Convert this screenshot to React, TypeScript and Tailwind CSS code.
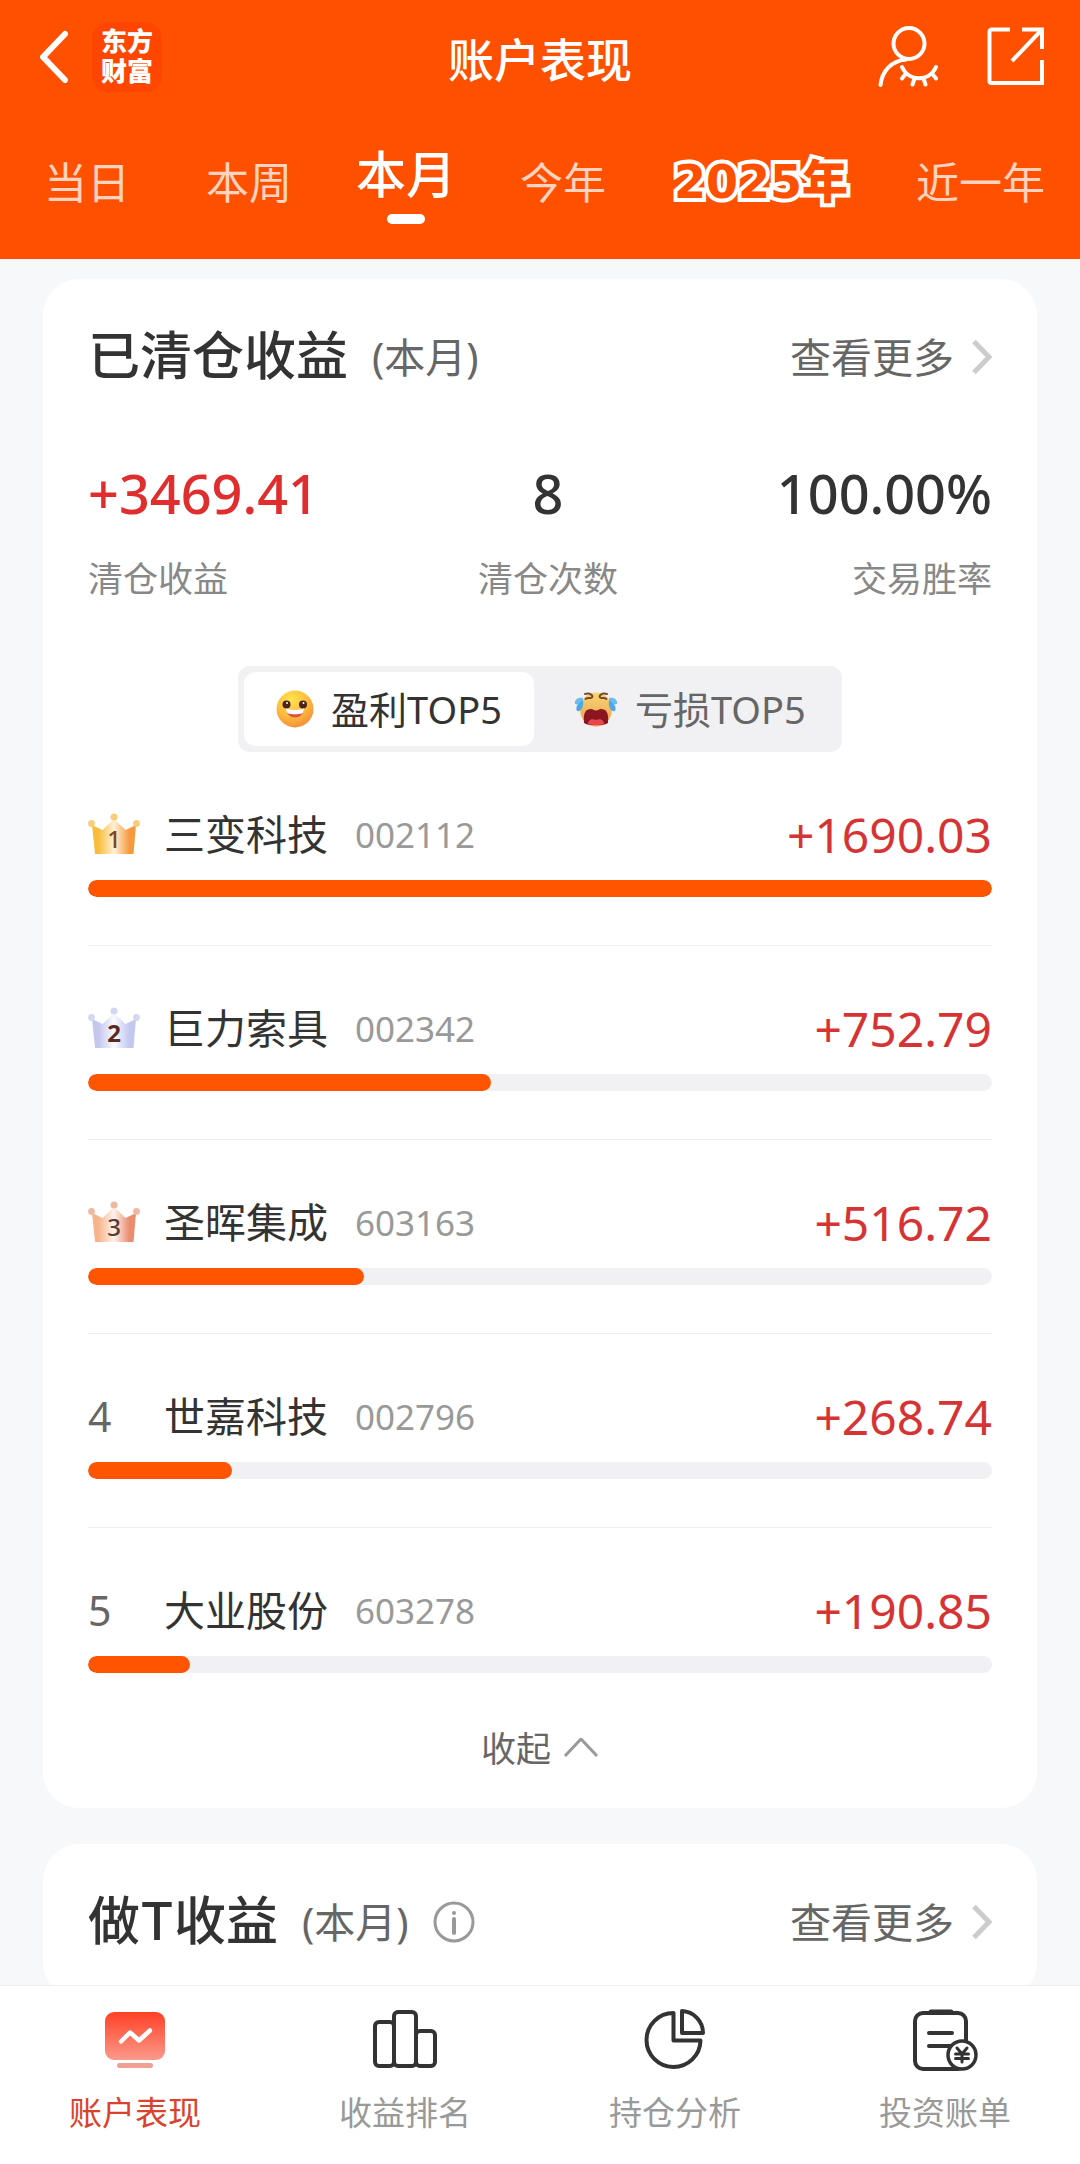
import { useState } from 'react'
import type { ReactNode } from 'react'

type Stock = {
  name: string
  code: string
  profit: number
}

const periods = ['当日', '本周', '本月', '今年', '2025年', '近一年']

const winners: Stock[] = [
  { name: '三变科技', code: '002112', profit: 1690.03 },
  { name: '巨力索具', code: '002342', profit: 752.79 },
  { name: '圣晖集成', code: '603163', profit: 516.72 },
  { name: '世嘉科技', code: '002796', profit: 268.74 },
  { name: '大业股份', code: '603278', profit: 190.85 },
]

const crowns = [
  { edge: '#f9bd3c', mid: '#fff1d6', end: '#f59a3e', ball: '#f8cd78', text: '#7d4526', weight: 500 },
  { edge: '#c3c8ec', mid: '#fafaff', end: '#c3c8ee', ball: '#d3d7f2', text: '#5a2a20', weight: 700 },
  { edge: '#f6b48c', mid: '#fff3ec', end: '#ea8c70', ball: '#f0b8a2', text: '#5c3a36', weight: 500 },
]

function BackIcon() {
  return (
    <svg width="33" height="54" viewBox="0 0 33 54" fill="none" stroke="#fff" strokeWidth="6" strokeLinecap="round" strokeLinejoin="round">
      <path d="M29 4 7 27 29 50" />
    </svg>
  )
}

function HiddenUserIcon() {
  return (
    <svg width="60" height="62" viewBox="0 0 60 62" fill="none" stroke="#fff" strokeWidth="4" strokeLinecap="round">
      <circle cx="31" cy="17.500" r="15.500" />
      <path d="M2.500 59C4 45 13 35 28 33.500" />
      <path d="M24 41c7 15 27 15 34 0" />
      <path d="m28 47.500-4 5M36.500 52.500l-2 6M45.500 52.500l2 6M54 47.500l4 5" />
    </svg>
  )
}

function ShareIcon() {
  return (
    <svg width="58" height="62" viewBox="0 0 58 62" fill="none" stroke="#fff" strokeWidth="4">
      <path d="M24 3.500H5.500a2 2 0 0 0-2 2V55a2 2 0 0 0 2 2H56V34" />
      <path d="M36 3.500h20V23M56 3.500 26 35" />
    </svg>
  )
}

function ChevronRight() {
  return (
    <svg width="20" height="36" viewBox="0 0 20 36" fill="none" stroke="#ccc" strokeWidth="5">
      <path d="m2 2.500 15 15.500L2 33.500" />
    </svg>
  )
}

function InfoIcon() {
  return (
    <svg width="42" height="42" viewBox="0 0 42 42" fill="none" stroke="#999" strokeWidth="3">
      <circle cx="21" cy="21" r="19" />
      <path d="M21 18v14" strokeWidth="4" strokeLinecap="round" />
      <circle cx="21" cy="12" r="2" fill="#999" stroke="none" />
    </svg>
  )
}

function SmileEmoji() {
  return (
    <svg width="38" height="38" viewBox="0 0 38 38">
      <defs>
        <radialGradient id="smile-face" cx="0.4" cy="0.25" r="0.8">
          <stop offset="0" stopColor="#ffe34d" />
          <stop offset="0.6" stopColor="#fdb83c" />
          <stop offset="1" stopColor="#f08a3c" />
        </radialGradient>
      </defs>
      <circle cx="19" cy="19" r="18.500" fill="url(#smile-face)" />
      <circle cx="10.500" cy="14.500" r="4" fill="#4a2418" />
      <circle cx="27" cy="14.500" r="4" fill="#4a2418" />
      <circle cx="11" cy="13" r="1" fill="#fff" />
      <circle cx="27.500" cy="13" r="1" fill="#fff" />
      <path d="M10 18.500c4 1.500 14 1.500 18 0 .5 4-3.500 9-9 9s-9.500-5-9-9Z" fill="#e0503f" />
      <path d="M10 18.500c4 1.500 14 1.500 18 0 .2 2.500-1 4.500-2 5-4 1-10 1-14 0-1-.5-2.200-2.500-2-5Z" fill="#fff" />
    </svg>
  )
}

function CryEmoji() {
  return (
    <svg width="44" height="38" viewBox="0 0 44 38">
      <defs>
        <linearGradient id="cry-face" x1="0" y1="0" x2="0" y2="1">
          <stop offset="0" stopColor="#f7d873" />
          <stop offset="1" stopColor="#ef9a50" />
        </linearGradient>
      </defs>
      <ellipse cx="22" cy="19.500" rx="16" ry="17" fill="url(#cry-face)" />
      <path d="M11 4c6-1.500 8 2 7 3.500S14 7 11.500 9M33 4c-6-1.500-8 2-7 3.500S30 7 32.500 9" fill="none" stroke="#7a4a2a" strokeWidth="2" strokeLinecap="round" />
      <path d="M10 33c-1-11 2-14 7-14 2 0 3 1.500 5 1.500s3-1.500 5-1.500c5 0 8 3 7 14-3 2-7 2-12 2s-9 0-12-2Z" fill="#8c1620" />
      <path d="M14 34c0-4 4-6 8-4 4-2 8 0 8 4-5 1.500-11 1.500-16 0Z" fill="#e6484e" />
      <path d="M9 8c-5-1-9 2-8 6 3 1.500 8-1 8-6ZM35 8c5-1 9 2 8 6-3 1.500-8-1-8-6Z" fill="#6bbdf0" />
      <path d="M9 10c-5 3-8 7-6 11 4 1 7-4 6-11ZM35 10c5 3 8 7 6 11-4 1-7-4-6-11Z" fill="#4ea8e8" />
    </svg>
  )
}

function Crown({ rank }: { rank: number }) {
  const c = crowns[rank - 1]
  const id = `crown-${rank}`

  return (
    <svg width="52" height="42" viewBox="0 0 52 42" role="img" aria-label={`第${rank}名`}>
      <defs>
        <linearGradient id={id}>
          <stop offset="0.150" stopColor={c.edge} />
          <stop offset="0.5" stopColor={c.mid} />
          <stop offset="0.850" stopColor={c.end} />
        </linearGradient>
      </defs>
      <path d="M4 12 14.500 17 26 6 37.500 17 48 12 45.500 41H7Z" fill={`url(#${id})`} />
      <circle cx="3.500" cy="10.500" r="3.400" fill={c.ball} />
      <circle cx="26" cy="4" r="3.500" fill={c.ball} />
      <circle cx="48.500" cy="10.500" r="3.400" fill={c.ball} />
      <text x="26" y="35" textAnchor="middle" fontSize="24" fontWeight={c.weight} fill={c.text}>
        {rank}
      </text>
    </svg>
  )
}

function PerformanceIcon() {
  return (
    <svg width="66" height="64" viewBox="0 0 66 64" fill="none">
      <defs>
        <linearGradient id="nav-screen" x1="0" y1="0" x2="0" y2="1">
          <stop offset="0" stopColor="#ff4026" />
          <stop offset="1" stopColor="#fb9a8b" />
        </linearGradient>
      </defs>
      <rect x="3" y="4" width="60" height="48" rx="9" fill="url(#nav-screen)" />
      <path d="m19 33.500 9-9 9 8 11-10" stroke="#fff" strokeWidth="4.500" strokeLinecap="round" strokeLinejoin="round" />
      <rect x="15" y="55" width="36" height="5" rx="2.500" fill="#f0a093" />
    </svg>
  )
}

function RankingIcon() {
  return (
    <svg width="66" height="64" viewBox="0 0 66 64" fill="none" stroke="#333" strokeWidth="4">
      <rect x="3" y="14" width="19" height="44" rx="4" />
      <rect x="22" y="4" width="22" height="54" rx="4" />
      <rect x="44" y="23" width="19" height="35" rx="4" />
    </svg>
  )
}

function AnalysisIcon() {
  return (
    <svg width="66" height="64" viewBox="0 0 66 64" fill="none" stroke="#333" strokeWidth="4" strokeLinejoin="round">
      <path d="M31.500 5v27.500h27A27 27 0 1 1 31.500 5Z" />
      <path d="M40 3v22h21A22 22 0 0 0 40 3Z" />
    </svg>
  )
}

function BillIcon() {
  return (
    <svg width="66" height="64" viewBox="0 0 66 64" fill="none" stroke="#333" strokeWidth="4" strokeLinecap="round">
      <rect x="3" y="5" width="51" height="56" rx="8" />
      <path d="M19 4h20" strokeWidth="5" />
      <path d="M17 25h23M17 38h23" />
      <circle cx="50" cy="47" r="14" fill="#fff" strokeWidth="3.500" />
      <path d="m45 40 5 6 5-6M50 46v8M43.500 46h13M43.500 50.500h13" strokeWidth="3" />
    </svg>
  )
}

const navItems = [
  { label: '账户表现', icon: <PerformanceIcon /> },
  { label: '收益排名', icon: <RankingIcon /> },
  { label: '持仓分析', icon: <AnalysisIcon /> },
  { label: '投资账单', icon: <BillIcon /> },
]

function CardHeader({ title, children }: { title: string; children?: ReactNode }) {
  return (
    <div className="flex h-14 items-center">
      <h2 className="font-['Inter','Noto_Sans_CJK_SC',sans-serif] text-[52px] font-medium leading-14 text-[#333]">{title}</h2>
      <span className="ml-6 text-[41px] leading-14 text-[#666]">(本月)</span>
      {children}
      <a href="#more" className="ml-auto flex items-center gap-[18px] text-[41px] leading-14 text-[#666]">
        查看更多
        <ChevronRight />
      </a>
    </div>
  )
}

function StockRow({ stock, rank, max }: { stock: Stock; rank: number; max: number }) {
  return (
    <li className="border-b border-[#eee] pt-14 pb-12 last:border-0 last:pb-0">
      <div className="flex h-[52px] items-center">
        <div className="w-[76px]">
          {rank <= 3 ? <Crown rank={rank} /> : <span className="text-[41px] leading-[52px] text-[#666]">{rank}</span>}
        </div>
        <span className="text-[41px] leading-[52px] text-[#333]">{stock.name}</span>
        <span className="ml-[27px] pt-0.5 text-[35px] leading-[52px] text-[#999]">{stock.code}</span>
        <span className="ml-auto pt-0.5 text-[48px] leading-[52px] text-[#d63434]">+{stock.profit.toFixed(2)}</span>
      </div>
      <div className="mt-5 h-[17px] overflow-hidden rounded-full bg-[#f1f1f4]">
        <div className="h-full rounded-full bg-[#ff5500]" style={{ width: `${(stock.profit / max) * 100}%` }} />
      </div>
    </li>
  )
}

export default function App() {
  const [period, setPeriod] = useState('本月')

  return (
    <div className="min-h-screen bg-[#f7f8fa] font-['Noto_Sans','Noto_Sans_CJK_SC',sans-serif]">
      <header className="bg-[#ff5000] text-white">
        <div className="grid h-[114px] grid-cols-[1fr_auto_1fr] items-center px-9">
          <div className="flex items-center gap-[23px]">
            <button type="button" aria-label="返回">
              <BackIcon />
            </button>
            <div className="flex size-[70px] items-center justify-center rounded-2xl bg-[#ff4600] text-center font-['Liberation_Sans','Noto_Sans_CJK_SC',sans-serif] text-[26px] font-black leading-[30px]">
              东方
              <br />
              财富
            </div>
          </div>
          <h1 className="pt-1 text-[46px] font-medium leading-14">账户表现</h1>
          <div className="flex items-center justify-end gap-12">
            <button type="button" aria-label="隐藏账户">
              <HiddenUserIcon />
            </button>
            <button type="button" aria-label="分享">
              <ShareIcon />
            </button>
          </div>
        </div>

        <nav className="flex h-[145px] items-end gap-16 pb-[35px] pl-[44px] whitespace-nowrap">
          {periods.map((item) => {
            if (item === period) {
              return (
                <button key={item} type="button" className="flex flex-col items-center text-[50px] font-medium leading-14">
                  {item}
                  <span className="mt-3 h-[10px] w-[38px] rounded-full bg-white" />
                </button>
              )
            }
            return (
              <button
                key={item}
                type="button"
                onClick={() => setPeriod(item)}
                className={
                  item === '2025年'
                    ? "px-1 pb-[14px] font-['DejaVu_Sans','Noto_Sans_CJK_SC',sans-serif] text-[46px] font-black leading-14 text-[#ff5000] [-webkit-text-stroke:8px_#fff] [paint-order:stroke_fill]"
                    : 'pb-[13px] text-[43px] leading-14 text-white/75 first:mr-3'
                }
              >
                {item}
              </button>
            )
          })}
        </nav>
      </header>

      <main className="flex flex-col gap-9 px-[43px] pt-5">
        <section className="rounded-[36px] bg-white px-[45px] pt-[50px] pb-[33px]">
          <CardHeader title="已清仓收益" />

          <dl className="mt-[78px] flex justify-between">
            <div className="flex flex-col-reverse">
              <dt className="mt-9 text-[35px] leading-10 text-[#888]">清仓收益</dt>
              <dd className="text-[54px] font-medium leading-[60px] text-[#e02d2d]">+3469.41</dd>
            </div>
            <div className="flex flex-col-reverse text-center">
              <dt className="mt-9 text-[35px] leading-10 text-[#888]">清仓次数</dt>
              <dd className="text-[54px] font-medium leading-[60px] text-[#333]">8</dd>
            </div>
            <div className="flex flex-col-reverse text-right">
              <dt className="mt-9 text-[35px] leading-10 text-[#888]">交易胜率</dt>
              <dd className="text-[54px] font-medium leading-[60px] text-[#333]">100.00%</dd>
            </div>
          </dl>

          <div className="mx-auto mt-[67px] flex h-[86px] w-[604px] rounded-xl bg-[#f1f1f4] p-[6px] text-[38px]">
            <button type="button" className="flex w-[290px] items-center justify-center gap-[17px] rounded-xl bg-white text-[#333]">
              <SmileEmoji />
              盈利TOP5
            </button>
            <button type="button" className="flex flex-1 items-center gap-[17px] pl-10 text-[#666]">
              <CryEmoji />
              亏损TOP5
            </button>
          </div>

          <ul>
            {winners.map((stock, i) => (
              <StockRow key={stock.code} stock={stock} rank={i + 1} max={winners[0].profit} />
            ))}
          </ul>

          <button type="button" className="mx-auto mt-[50px] flex h-[52px] items-center gap-3 text-[35px] text-[#666]">
            收起
            <svg width="36" height="22" viewBox="0 0 36 22" fill="none" stroke="#999" strokeWidth="3">
              <path d="M2 18 18 1l16 17" />
            </svg>
          </button>
        </section>

        <section className="rounded-[36px] bg-white px-[45px] pt-[50px] pb-[49px]">
          <CardHeader title="做T收益">
            <button type="button" aria-label="说明" className="ml-6">
              <InfoIcon />
            </button>
          </CardHeader>
        </section>
      </main>

      <nav className="fixed inset-x-0 bottom-0 grid h-[179px] grid-cols-4 border-t border-[#eee] bg-white pt-[22px]">
        {navItems.map((item, i) => (
          <a
            key={item.label}
            href={`#${item.label}`}
            className={`flex flex-col items-center gap-[21px] text-[33px] leading-10 ${i === 0 ? 'text-[#d9432e]' : 'text-[#999]'}`}
          >
            {item.icon}
            {item.label}
          </a>
        ))}
      </nav>
    </div>
  )
}
